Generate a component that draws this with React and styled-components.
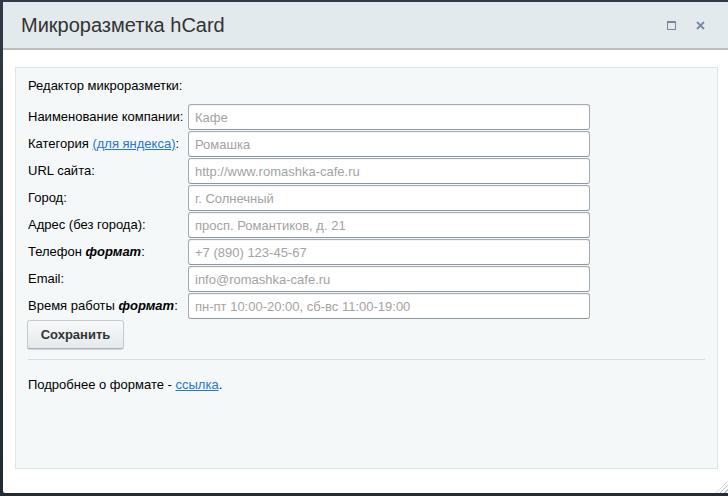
import styled, { createGlobalStyle } from 'styled-components';

const GlobalStyle = createGlobalStyle`
	html, body {
		margin: 0;
		padding: 0;
		background: #27313b;
		font-family: 'Liberation Sans', Arial, sans-serif;
	}
`;

const Screen = styled.div`
	width: 728px;
	height: 496px;
	padding: 2px 0 3px 3px;
	box-sizing: border-box;
	background: linear-gradient(180deg, #2f3a45 0%, #232c35 100%);
	overflow: hidden;
`;

const Dialog = styled.div`
	height: 100%;
	display: flex;
	flex-direction: column;
	background: #fff;
	border-radius: 2px 0 0 2px;
	position: relative;
`;

const Header = styled.div`
	height: 46px;
	flex: none;
	display: flex;
	align-items: center;
	padding: 0 23px 0 18px;
	background: #e2eaed;
	border-bottom: 2px solid #b9bfc3;
`;

const Title = styled.h1`
	flex: 1;
	margin: 0;
	font-size: 20px;
	font-weight: normal;
	color: #333;
`;

const Controls = styled.div`
	display: flex;
	align-items: center;
	gap: 20px;
	margin-top: 1px;
`;

const IconButton = styled.span`
	display: block;
	width: 9px;
	height: 9px;
	color: #7a8a9c;

	svg {
		display: block;
	}
`;

const Body = styled.div`
	flex: 1;
	padding: 17px 10px 24px 12px;
`;

const Panel = styled.div`
	height: 100%;
	box-sizing: border-box;
	background: #f5f8f9;
	border: 1px solid #dbe5ea;
	padding: 10px 12px 0 12px;
	font-size: 13px;
	color: #000;
`;

const Caption = styled.div`
	line-height: 16px;
	margin-bottom: 10px;
`;

const Form = styled.div`
	display: grid;
	grid-template-columns: 160px 402px;
	row-gap: 1px;
	align-items: center;
`;

const Label = styled.label`
	line-height: 16px;
	white-space: nowrap;
`;

const Input = styled.input`
	box-sizing: border-box;
	width: 100%;
	height: 26px;
	margin: 0;
	padding: 0 6px;
	border: 1px solid #a3aab3;
	border-bottom-color: #8d959e;
	border-radius: 3px;
	background: #fff;
	font-family: 'Liberation Sans', Arial, sans-serif;
	font-size: 13px;
	color: #000;
	box-shadow: inset 0 1px 0 rgba(0, 0, 0, 0.04);

	&::placeholder {
		color: #a3a3a3;
	}
`;

const Link = styled.a`
	color: #2675d7;
	text-decoration: underline;
`;

const SaveButton = styled.button`
	display: block;
	margin: 1px 0 0 -1px;
	width: 97px;
	height: 29px;
	border: 1px solid #c5cbd0;
	border-bottom-color: #aab1b7;
	border-radius: 3px;
	background: linear-gradient(180deg, #f8fafa 0%, #e3e9ec 100%);
	box-shadow: 0 1px 1px rgba(0, 0, 0, 0.15);
	font-family: 'Liberation Sans', Arial, sans-serif;
	font-size: 13px;
	font-weight: bold;
	color: #333;
`;

const Divider = styled.hr`
	margin: 10px 0 0 0;
	border: none;
	border-top: 1px solid #d8dde0;
`;

const Footer = styled.p`
	margin: 17px 0 0 0;
	line-height: 16px;
`;

const Resize = styled.div`
	position: absolute;
	right: 0;
	bottom: 0;
	width: 12px;
	height: 12px;
	background: repeating-linear-gradient(135deg, transparent 0 2px, #b7bec4 2px 3px);
	clip-path: polygon(100% 0, 100% 100%, 0 100%);
`;

const fields = [
	{ label: 'Наименование компании:', placeholder: 'Кафе' },
	{ label: 'Категория', link: '(для яндекса)', placeholder: 'Ромашка' },
	{ label: 'URL сайта:', placeholder: 'http://www.romashka-cafe.ru' },
	{ label: 'Город:', placeholder: 'г. Солнечный' },
	{ label: 'Адрес (без города):', placeholder: 'просп. Романтиков, д. 21' },
	{ label: 'Телефон', format: true, placeholder: '+7 (890) 123-45-67' },
	{ label: 'Email:', placeholder: 'info@romashka-cafe.ru' },
	{ label: 'Время работы', format: true, placeholder: 'пн-пт 10:00-20:00, сб-вс 11:00-19:00' },
];

function FieldLabel({ field }) {
	if (field.link) {
		return (
			<Label>
				{field.label} <Link href="#">{field.link}</Link>:
			</Label>
		);
	}
	if (field.format) {
		return (
			<Label>
				{field.label} <b><i>формат</i></b>:
			</Label>
		);
	}
	return <Label>{field.label}</Label>;
}

export default function App() {
	return (
		<>
			<GlobalStyle />
			<Screen>
				<Dialog>
					<Header>
						<Title>Микроразметка hCard</Title>
						<Controls>
							<IconButton>
								<svg width="9" height="9" viewBox="0 0 9 9">
									<rect x="0.5" y="0.5" width="8" height="8" fill="none" stroke="currentColor" />
									<rect x="0" y="0" width="9" height="2" fill="currentColor" />
								</svg>
							</IconButton>
							<IconButton>
								<svg width="9" height="9" viewBox="0 0 9 9">
									<path d="M1 1 L8 8 M8 1 L1 8" stroke="currentColor" strokeWidth="1.8" />
								</svg>
							</IconButton>
						</Controls>
					</Header>
					<Body>
						<Panel>
							<Caption>Редактор микроразметки:</Caption>
							<Form>
								{fields.map((field) => (
									<>
										<FieldLabel key={field.label + 'l'} field={field} />
										<Input key={field.label + 'i'} placeholder={field.placeholder} />
									</>
								))}
							</Form>
							<SaveButton>Сохранить</SaveButton>
							<Divider />
							<Footer>
								Подробнее о формате - <Link href="#">ссылка</Link>.
							</Footer>
						</Panel>
					</Body>
					<Resize />
				</Dialog>
			</Screen>
		</>
	);
}
